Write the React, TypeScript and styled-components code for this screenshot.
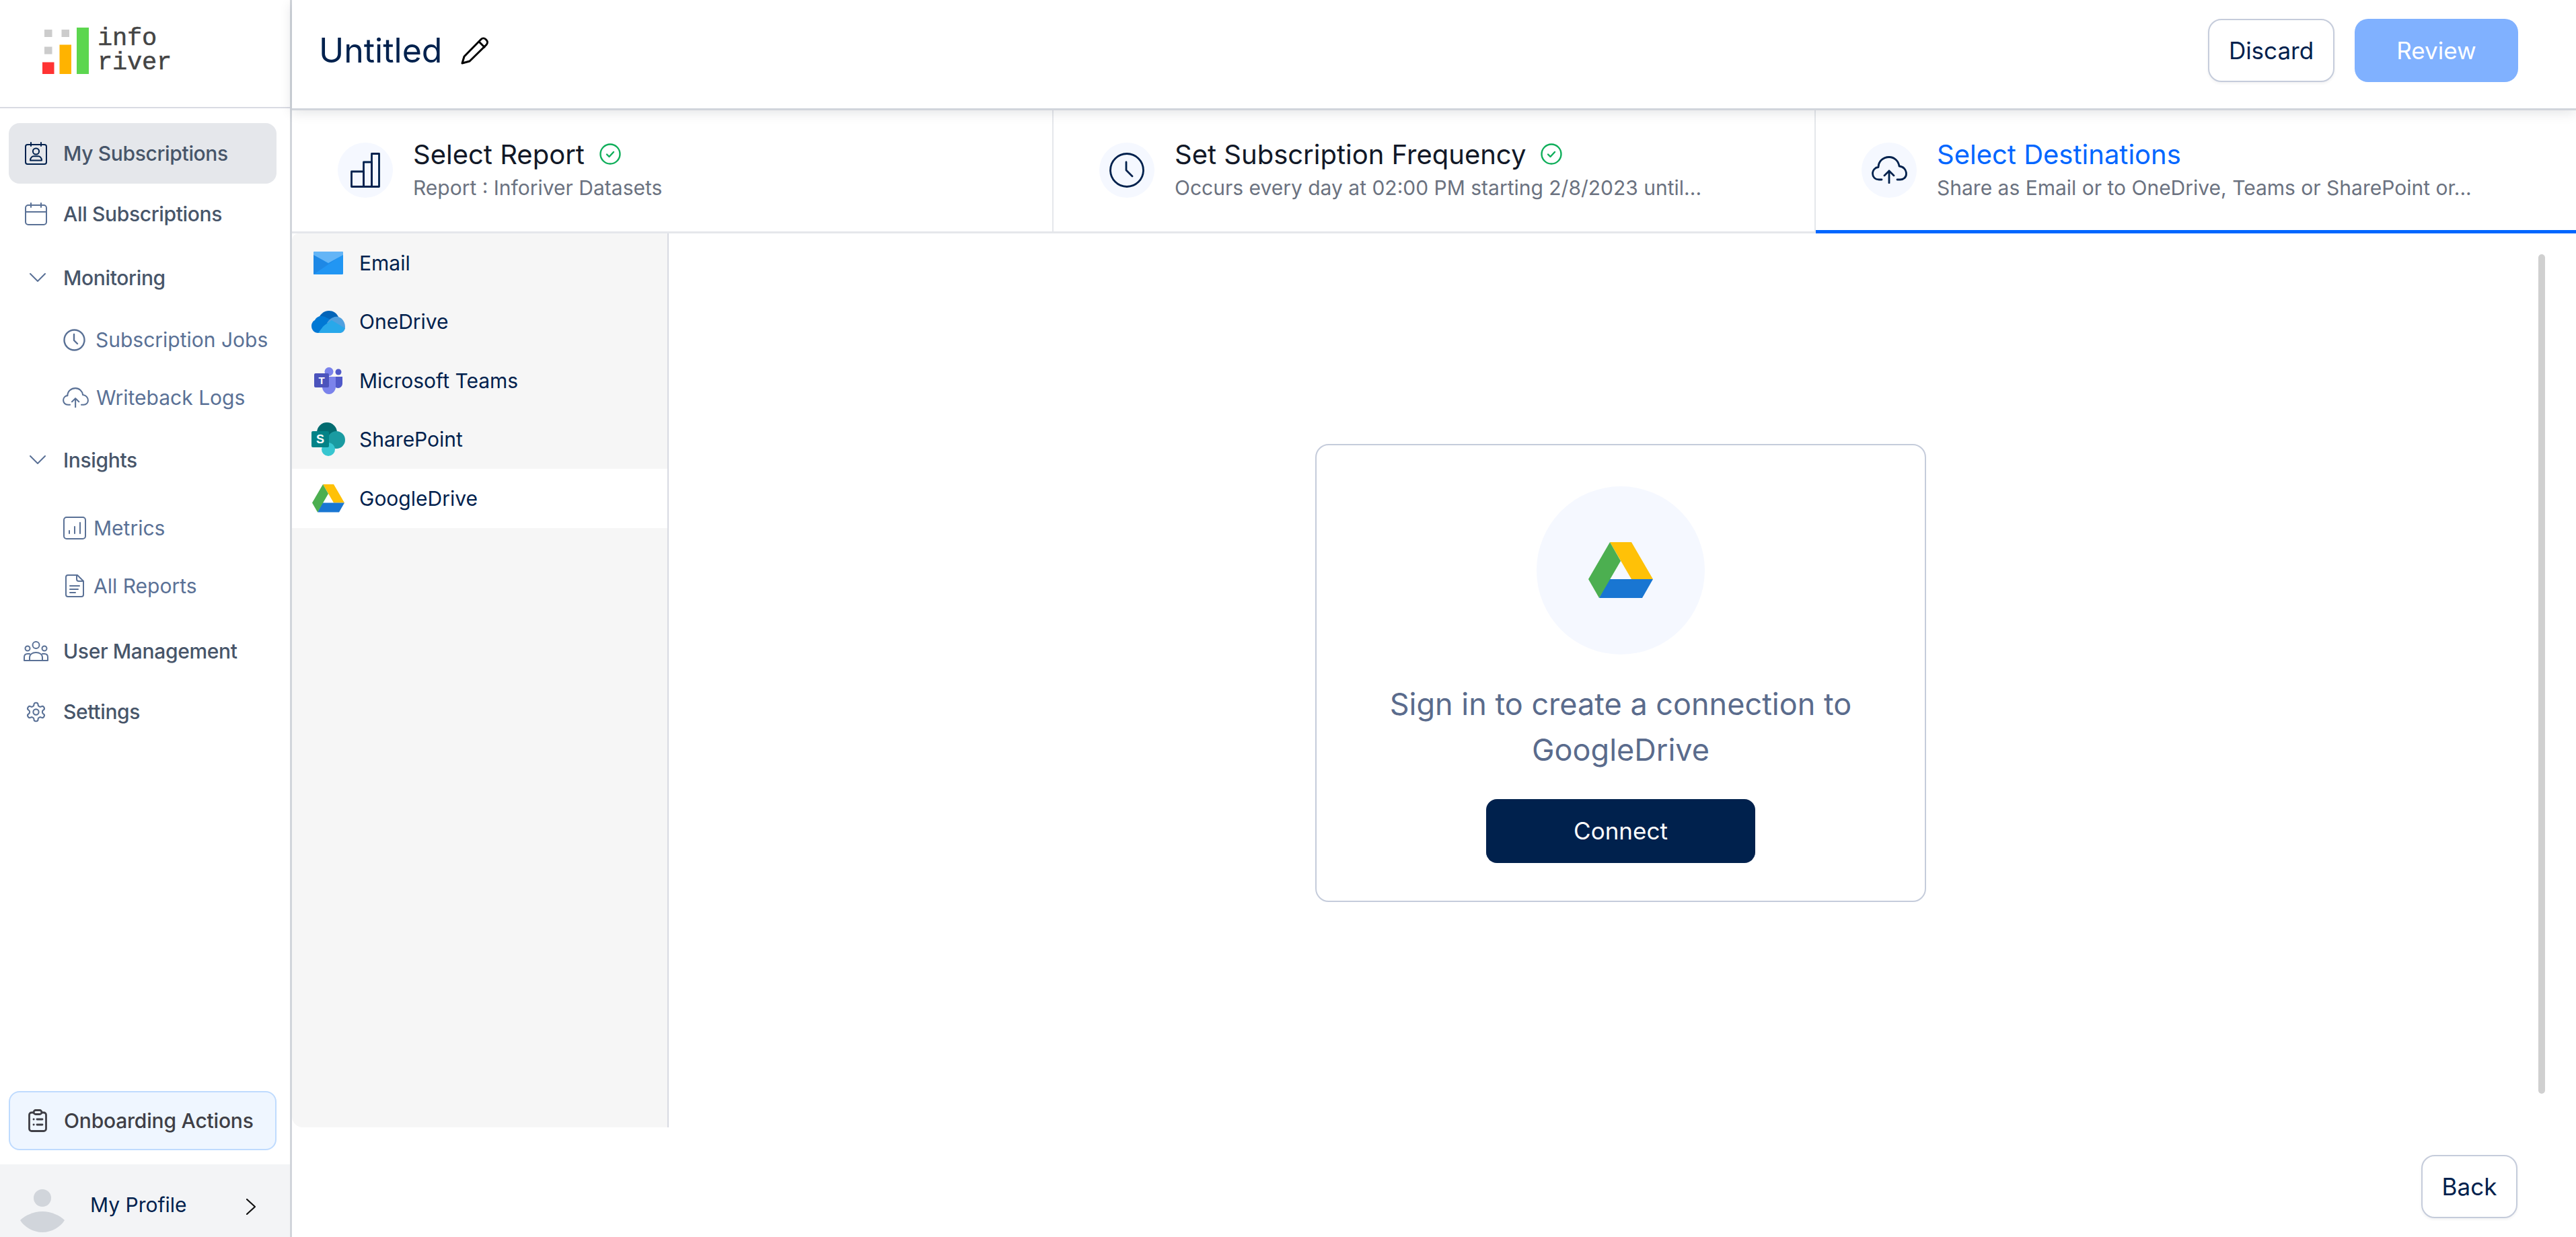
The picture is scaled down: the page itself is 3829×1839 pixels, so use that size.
import React from 'react';
import styled, { createGlobalStyle } from 'styled-components';

const GlobalStyle = createGlobalStyle`
  * { box-sizing: border-box; }
  html, body { margin: 0; padding: 0; height: 100%; background: #fff; }
  body { font-family: Inter, "Noto Sans", sans-serif; overflow: hidden; }
`;

const NAVY = '#00214d';
const SLATE = '#5a7196';

const Page = styled.div`
  display: flex;
  width: 100vw;
  height: 100vh;
`;

const Sidebar = styled.aside`
  width: 434px;
  flex: none;
  display: flex;
  flex-direction: column;
  border-right: 3px solid #d1d5db;
`;

const LogoBar = styled.div`
  height: 161px;
  flex: none;
  display: flex;
  align-items: flex-start;
  gap: 12px;
  padding: 41px 0 0 63px;
  border-bottom: 2px solid #d9dbe3;
`;

const LogoText = styled.div`
  font-family: "Liberation Mono", monospace;
  font-size: 37px;
  line-height: 36px;
  letter-spacing: -0.2px;
  -webkit-text-stroke: 0.5px #444;
  color: #444;
  margin-top: -2px;
`;

const Nav = styled.nav`
  flex: 1;
  display: flex;
  flex-direction: column;
  padding: 22px 20px 0 13px;
`;

const NavRow = styled.div<{ $active?: boolean; $top?: number }>`
  height: 90px;
  flex: none;
  display: flex;
  align-items: center;
  padding-left: 24px;
  margin-top: ${(p) => p.$top ?? 0}px;
  border-radius: 16px;
  background: ${(p) => (p.$active ? '#e5e7eb' : 'transparent')};
  font-size: 30px;
  font-weight: 500;
  letter-spacing: -0.35px;
  color: #475569;
`;

const NavIcon = styled.span`
  width: 57px;
  flex: none;
  display: flex;
  align-items: center;
`;

const SubRow = styled.div<{ $top?: number; $gap: number; $left?: number }>`
  height: 86px;
  flex: none;
  display: flex;
  align-items: center;
  gap: ${(p) => p.$gap}px;
  padding-left: ${(p) => p.$left ?? 81}px;
  margin-top: ${(p) => p.$top ?? 0}px;
  font-size: 30px;
  color: ${SLATE};
`;

const Onboarding = styled.div`
  height: 88px;
  margin: 0 20px 21px 13px;
  display: flex;
  align-items: center;
  gap: 25px;
  padding-left: 27px;
  background: #eff6ff;
  border: 2px solid #bfdbfe;
  border-radius: 16px;
  font-size: 30px;
  font-weight: 500;
  letter-spacing: -0.2px;
  color: #3f3f46;
`;

const Profile = styled.div`
  height: 108px;
  flex: none;
  display: flex;
  align-items: center;
  padding: 0 51px 0 30px;
  background: #f3f4f6;
  font-size: 30px;
  color: ${NAVY};
`;

const ProfileName = styled.span`
  flex: 1;
  margin: 12px 0 0 38px;
`;

const Main = styled.main`
  flex: 1;
  min-width: 0;
  display: flex;
  flex-direction: column;
`;

const Header = styled.header`
  position: relative;
  z-index: 2;
  height: 161px;
  flex: none;
  display: flex;
  align-items: center;
  padding: 0 86px 11px 40px;
  background: #fff;
  box-shadow: 0 3px 0 #d1d5db, 0 6px 18px rgba(17, 24, 39, 0.12);
`;

const PageTitle = styled.h1`
  margin: 0 28px 0 0;
  font-size: 50px;
  font-weight: 400;
  color: ${NAVY};
`;

const HeaderActions = styled.div`
  margin-left: auto;
  display: flex;
  gap: 30px;
`;

const OutlineButton = styled.button<{ $width: number }>`
  width: ${(p) => p.$width}px;
  height: 94px;
  background: #fff;
  border: 2px solid #c5ccdb;
  border-radius: 20px;
  font-family: inherit;
  font-size: 35px;
  color: ${NAVY};
  box-shadow: 0 2px 4px rgba(17, 24, 39, 0.06);
`;

const ReviewButton = styled.button`
  width: 243px;
  height: 94px;
  background: #80b1ff;
  border: none;
  border-radius: 20px;
  font-family: inherit;
  font-size: 35px;
  color: #fff;
`;

const Tabs = styled.div`
  height: 186px;
  flex: none;
  display: grid;
  grid-template-columns: 1132px 1133px 1fr;
  border-bottom: 3px solid #e5e7eb;
`;

const Tab = styled.div<{ $active?: boolean }>`
  position: relative;
  min-width: 0;
  display: flex;
  align-items: center;
  gap: 30px;
  padding: 0 0 0 68px;
  border-right: 2px solid #e5e7eb;
  &:last-child { border-right: none; }
  &::after {
    content: '';
    display: ${(p) => (p.$active ? 'block' : 'none')};
    position: absolute;
    left: 0;
    right: 0;
    bottom: -3px;
    height: 5px;
    background: #0066ff;
  }
`;

const TabBubble = styled.div`
  width: 82px;
  height: 82px;
  flex: none;
  display: flex;
  align-items: center;
  justify-content: center;
  border-radius: 50%;
  background: #f5f8ff;
`;

const TabText = styled.div`
  display: flex;
  flex-direction: column;
  min-width: 0;
  margin-top: -2px;
`;

const TabTitle = styled.div<{ $active?: boolean }>`
  display: flex;
  align-items: center;
  gap: 22px;
  height: 50px;
  font-size: 40px;
  color: ${(p) => (p.$active ? '#0066ff' : '#111827')};
`;

const TabSub = styled.div`
  margin-top: 5px;
  line-height: 40px;
  font-size: 30px;
  color: #6b7280;
  white-space: nowrap;
`;

const Body = styled.div`
  height: 1329px;
  flex: none;
  display: flex;
`;

const DestList = styled.div`
  width: 560px;
  flex: none;
  display: flex;
  flex-direction: column;
  background: #f6f6f6;
  border-right: 2px solid #d8dae2;
  border-radius: 10px 0 0 16px;
`;

const DestRow = styled.div<{ $active?: boolean }>`
  height: 87.5px;
  flex: none;
  display: flex;
  align-items: center;
  padding-left: 29px;
  background: ${(p) => (p.$active ? '#fff' : 'transparent')};
  font-size: 30px;
  color: ${NAVY};
`;

const DestIcon = styled.span`
  width: 71px;
  flex: none;
  display: flex;
  justify-content: center;
  padding-right: 21px;
`;

const Canvas = styled.div`
  position: relative;
  flex: 1;
  display: flex;
  align-items: center;
  justify-content: center;
  padding: 0 5px 23px 0;
`;

const ScrollThumb = styled.div`
  position: absolute;
  top: 31px;
  right: 46px;
  bottom: 50px;
  width: 10px;
  border-radius: 5px;
  background: #d0d0d0;
`;

const ConnectCard = styled.div`
  width: 908px;
  height: 681px;
  display: flex;
  flex-direction: column;
  align-items: center;
  padding-top: 61px;
  border: 2px solid #c5ccdb;
  border-radius: 20px;
  background: #fff;
`;

const CardBubble = styled.div`
  width: 250px;
  height: 250px;
  flex: none;
  display: flex;
  align-items: center;
  justify-content: center;
  border-radius: 50%;
  background: #f5f8ff;
`;

const CardMessage = styled.p`
  width: 720px;
  margin: 40px 0 0;
  text-align: center;
  font-size: 45px;
  line-height: 68.5px;
  color: #5a6b8c;
`;

const ConnectButton = styled.button`
  width: 400px;
  height: 95px;
  flex: none;
  margin-top: 38px;
  background: ${NAVY};
  border: none;
  border-radius: 16px;
  font-family: inherit;
  font-size: 35px;
  color: #fff;
`;

const Footer = styled.footer`
  flex: 1;
  display: flex;
  justify-content: flex-end;
  padding: 41px 87px 0 0;
`;

const Stroke = styled.svg`
  display: block;
  flex: none;
  fill: none;
  stroke-linecap: round;
  stroke-linejoin: round;
`;

const AvatarSvg = styled.svg`
  display: block;
  flex: none;
  margin-top: 30px;
`;

const LogoMark = () => (
  <svg width="70" height="69" viewBox="0 0 70 69">
    <rect x="3" y="3" width="11.5" height="11" fill="#cccccc" />
    <rect x="28.5" y="3" width="11.5" height="11" fill="#cccccc" />
    <rect x="3" y="28.5" width="11.5" height="11" fill="#cccccc" />
    <rect x="0" y="51.5" width="17.5" height="17.5" fill="#ff3333" />
    <rect x="25.5" y="25.5" width="17.5" height="43.500" fill="#ffb300" />
    <rect x="51" y="0" width="18" height="69" fill="#5cd64f" />
  </svg>
);

const CalendarPerson = () => (
  <Stroke width="33" height="34" viewBox="0 0 33 34" stroke={NAVY} strokeWidth="2">
    <rect x="1" y="4" width="31" height="29" rx="3" />
    <path d="M9 1v5M24 1v5" />
    <circle cx="16.500" cy="14" r="4.600" />
    <path d="M8 27.500c0-4 2.800-6.200 5-6.200h7c2.200 0 5 2.200 5 6.200z" />
  </Stroke>
);

const CalendarLine = () => (
  <Stroke width="33" height="34" viewBox="0 0 33 34" stroke={SLATE} strokeWidth="2">
    <rect x="1" y="4" width="31" height="29" rx="4" />
    <path d="M9 1v6M24 1v6M1 14h31" />
  </Stroke>
);

const ChevronDown = () => (
  <Stroke width="24" height="14" viewBox="0 0 24 14" stroke={SLATE} strokeWidth="2" style={{ marginLeft: 7 }}>
    <path d="M1 1l11 11L23 1" />
  </Stroke>
);

const ClockSmall = () => (
  <Stroke width="33" height="33" viewBox="0 0 33 33" stroke={SLATE} strokeWidth="2.400">
    <circle cx="16.500" cy="16.500" r="15" />
    <path d="M16 8v9l5 5" />
  </Stroke>
);

const CloudUp = ({ color = SLATE, width = 39, weight = 2.800 }: { color?: string; width?: number; weight?: number }) => (
  <Stroke width={width} height={(width * 41) / 53} viewBox="0 0 53 41" stroke={color} strokeWidth={weight}>
    <path d="M15 35h-4C5 35 1.500 31 1.500 26c0-5 3.500-9 8.500-9.500C10 8 17 1.500 26 1.500c8 0 14 6 15 13.500 6 .5 10.500 5 10.500 11.500 0 5-4 8.500-9 8.500H38" />
    <path d="M26 40V22M19 29l7-7 7 7" />
  </Stroke>
);

const MetricsIcon = () => (
  <Stroke width="34" height="34" viewBox="0 0 34 34" stroke={SLATE} strokeWidth="2">
    <rect x="1" y="1" width="32" height="32" rx="4" />
    <path d="M9 21v4M17 15v10M25 9v16" />
  </Stroke>
);

const ReportIcon = () => (
  <Stroke width="28" height="34" viewBox="0 0 28 34" stroke={SLATE} strokeWidth="2">
    <path d="M4 1h14l9 9v20a3 3 0 0 1-3 3H4a3 3 0 0 1-3-3V4a3 3 0 0 1 3-3z" />
    <path d="M17 1v6a3 3 0 0 0 3 3h7M7 17h14M7 22h12M7 27h8" />
  </Stroke>
);

const UsersIcon = () => (
  <Stroke width="37" height="30" viewBox="0 0 37 30" stroke={SLATE} strokeWidth="2" style={{ marginLeft: -2 }}>
    <circle cx="18.500" cy="6" r="5" />
    <circle cx="6" cy="11" r="3.500" />
    <circle cx="31" cy="11" r="3.500" />
    <path d="M1 29v-5c0-3 2-5 5-5h3M36 29v-5c0-3-2-5-5-5h-3M9 29v-5c0-4 4-7 9.500-7s9.500 3 9.500 7v5M1 29h35" />
  </Stroke>
);

const GearIcon = () => (
  <Stroke width="33" height="33" viewBox="0 0 24 24" stroke={SLATE} strokeWidth="1.500">
    <path d="M12.220 2h-.44a2 2 0 0 0-2 2v.18a2 2 0 0 1-1 1.730l-.43.250a2 2 0 0 1-2 0l-.15-.080a2 2 0 0 0-2.730.730l-.22.380a2 2 0 0 0 .730 2.730l.15.100a2 2 0 0 1 1 1.720v.510a2 2 0 0 1-1 1.740l-.15.090a2 2 0 0 0-.730 2.730l.22.380a2 2 0 0 0 2.730.730l.15-.080a2 2 0 0 1 2 0l.43.250a2 2 0 0 1 1 1.730V20a2 2 0 0 0 2 2h.44a2 2 0 0 0 2-2v-.18a2 2 0 0 1 1-1.730l.43-.250a2 2 0 0 1 2 0l.15.080a2 2 0 0 0 2.730-.730l.22-.390a2 2 0 0 0-.730-2.730l-.15-.080a2 2 0 0 1-1-1.740v-.500a2 2 0 0 1 1-1.740l.15-.090a2 2 0 0 0 .730-2.730l-.22-.380a2 2 0 0 0-2.730-.730l-.15.080a2 2 0 0 1-2 0l-.43-.250a2 2 0 0 1-1-1.730V4a2 2 0 0 0-2-2z" />
    <circle cx="12" cy="12" r="3" />
  </Stroke>
);

const ClipboardIcon = () => (
  <Stroke width="28" height="34" viewBox="0 0 28 34" stroke="#3f3f46" strokeWidth="2.800">
    <path d="M8 5H5a3.500 3.500 0 0 0-3.500 3.500V29A3.500 3.500 0 0 0 5 32.500h18a3.500 3.500 0 0 0 3.500-3.500V8.500A3.500 3.500 0 0 0 23 5h-3" />
    <rect x="8" y="1.500" width="12" height="6" rx="3" />
    <path d="M8 15h.2M13 15h8M8 23h.2M13 23h8" />
  </Stroke>
);

const Avatar = () => (
  <AvatarSvg width="66" height="64" viewBox="0 0 66 64">
    <circle cx="33" cy="13" r="13" fill="#d1d5db" />
    <path d="M0 46c7-7 20-13 33-13s26 6 33 13c-6 10-19 18-33 18S6 56 0 46z" fill="#d1d5db" />
  </AvatarSvg>
);

const ChevronRight = () => (
  <Stroke width="14" height="24" viewBox="0 0 14 24" stroke="#111" strokeWidth="2.200" style={{ marginTop: 18 }}>
    <path d="M1 1l12 11L1 23" />
  </Stroke>
);

const PencilIcon = () => (
  <Stroke width="42" height="42" viewBox="0 0 42 42" stroke="#000" strokeWidth="3">
    <path d="M2 40l3-10L30 4.500a5 5 0 0 1 7 0l1 1a5 5 0 0 1 0 7L13 37z" />
    <path d="M27 8l8 8" />
  </Stroke>
);

const BarsIcon = () => (
  <Stroke width="44" height="52" viewBox="0 0 44 52" stroke={NAVY} strokeWidth="2.800">
    <rect x="1.500" y="28" width="18" height="22.500" />
    <rect x="19.500" y="14" width="12" height="36.500" />
    <rect x="31.500" y="1.500" width="11" height="49" />
  </Stroke>
);

const ClockLarge = () => (
  <Stroke width="52" height="52" viewBox="0 0 52 52" stroke={NAVY} strokeWidth="2.800">
    <circle cx="26" cy="26" r="24.500" />
    <path d="M25 14v12l9 9" />
  </Stroke>
);

const CheckCircle = () => (
  <Stroke width="32" height="32" viewBox="0 0 32 32" stroke="#0fae5a" strokeWidth="2.400">
    <circle cx="16" cy="16" r="14.500" />
    <path d="M11 16.500l3.500 3.500 6.500-7" />
  </Stroke>
);

const MailIcon = () => (
  <svg width="44" height="34" viewBox="0 0 44 34">
    <rect width="44" height="34" rx="1.500" fill="#2196f3" />
    <path d="M0 34V4l22 14 22-14v0L0 34z" fill="#1e88e5" />
    <path d="M0 2a2 2 0 0 1 2-2h40a2 2 0 0 1 2 2v3L22 17 0 5z" fill="#64b5f6" />
  </svg>
);

const OneDriveIcon = () => (
  <svg width="50" height="33" viewBox="0 0 50 33">
    <path d="M10 15C11 6 18 0 26 0c6 0 11 3 14 9L20 20z" fill="#0364b8" />
    <path d="M20 9c-6-2-12-1-15 5C1 16 0 20 0 23c0 5 4 10 10 10h5l19-17z" fill="#0078d4" />
    <path d="M40 9c-5-1-10 1-14 5l-3 4 16 15h3c5 0 8-4 8-9 0-7-4-13-10-15z" fill="#50a0df" />
    <path d="M10 33h30c4 0 8-2 10-7l-20-12-10 7c-3 2-6 7-10 12z" fill="#28a8ea" />
  </svg>
);

const TeamsIcon = () => (
  <svg width="42" height="40" viewBox="0 0 42 40">
    <circle cx="36" cy="7" r="4.500" fill="#5059c9" />
    <path d="M29 14h13v10c0 4-3 7-6.500 7S29 28 29 24z" fill="#5059c9" />
    <circle cx="22" cy="6.500" r="6.500" fill="#7b83eb" />
    <path d="M12 14h20v15c0 6-4.500 11-10 11s-10-5-10-11z" fill="#7b83eb" />
    <rect y="9" width="22" height="21" rx="2" fill="#4b53bc" />
    <text x="11" y="25" textAnchor="middle" fontFamily="Liberation Sans, sans-serif" fontWeight="700" fontSize="15" fill="#fff">T</text>
  </svg>
);

const SharePointIcon = () => (
  <svg width="50" height="50" viewBox="0 0 50 50">
    <circle cx="23" cy="15" r="15" fill="#036c70" />
    <circle cx="37" cy="26" r="13" fill="#1a9ba1" />
    <circle cx="25" cy="40" r="10" fill="#37c6d0" />
    <rect y="13" width="26" height="24" rx="2" fill="#038387" />
    <text x="13" y="31" textAnchor="middle" fontFamily="Liberation Sans, sans-serif" fontWeight="700" fontSize="18" fill="#fff">S</text>
  </svg>
);

const DriveIcon = ({ width }: { width: number }) => (
  <svg width={width} height={(width * 83) / 96} viewBox="0 0 96 83">
    <polygon points="32,0 64,0 96,55 64,55" fill="#ffc107" />
    <polygon points="30,55 96,55 80,83 16,83" fill="#1976d2" />
    <polygon points="32,0 48,28 16,83 0,55" fill="#4caf50" />
  </svg>
);

const App = () => {
  return (
    <Page>
      <GlobalStyle />
      <Sidebar>
        <LogoBar>
          <LogoMark />
          <LogoText>
            info
            <br />
            river
          </LogoText>
        </LogoBar>
        <Nav>
          <NavRow $active>
            <NavIcon><CalendarPerson /></NavIcon>
            My Subscriptions
          </NavRow>
          <NavRow>
            <NavIcon><CalendarLine /></NavIcon>
            All Subscriptions
          </NavRow>
          <NavRow $top={5}>
            <NavIcon><ChevronDown /></NavIcon>
            Monitoring
          </NavRow>
          <SubRow $top={4} $gap={15}>
            <ClockSmall />
            Subscription Jobs
          </SubRow>
          <SubRow $gap={11} $left={80}>
            <CloudUp />
            Writeback Logs
          </SubRow>
          <NavRow $top={5}>
            <NavIcon><ChevronDown /></NavIcon>
            Insights
          </NavRow>
          <SubRow $top={13} $gap={11}>
            <MetricsIcon />
            Metrics
          </SubRow>
          <SubRow $gap={14} $left={84}>
            <ReportIcon />
            All Reports
          </SubRow>
          <NavRow $top={9}>
            <NavIcon><UsersIcon /></NavIcon>
            User Management
          </NavRow>
          <NavRow>
            <NavIcon><GearIcon /></NavIcon>
            Settings
          </NavRow>
        </Nav>
        <Onboarding>
          <ClipboardIcon />
          Onboarding Actions
        </Onboarding>
        <Profile>
          <Avatar />
          <ProfileName>My Profile</ProfileName>
          <ChevronRight />
        </Profile>
      </Sidebar>
      <Main>
        <Header>
          <PageTitle>Untitled</PageTitle>
          <PencilIcon />
          <HeaderActions>
            <OutlineButton $width={188}>Discard</OutlineButton>
            <ReviewButton>Review</ReviewButton>
          </HeaderActions>
        </Header>
        <Tabs>
          <Tab>
            <TabBubble><BarsIcon /></TabBubble>
            <TabText>
              <TabTitle>Select Report <CheckCircle /></TabTitle>
              <TabSub>Report : Inforiver Datasets</TabSub>
            </TabText>
          </Tab>
          <Tab>
            <TabBubble><ClockLarge /></TabBubble>
            <TabText>
              <TabTitle>Set Subscription Frequency <CheckCircle /></TabTitle>
              <TabSub>Occurs every day at 02:00 PM starting 2/8/2023 until...</TabSub>
            </TabText>
          </Tab>
          <Tab $active>
            <TabBubble><CloudUp color={NAVY} width={53} /></TabBubble>
            <TabText>
              <TabTitle $active>Select Destinations</TabTitle>
              <TabSub>Share as Email or to OneDrive, Teams or SharePoint or...</TabSub>
            </TabText>
          </Tab>
        </Tabs>
        <Body>
          <DestList>
            <DestRow><DestIcon><MailIcon /></DestIcon>Email</DestRow>
            <DestRow><DestIcon><OneDriveIcon /></DestIcon>OneDrive</DestRow>
            <DestRow><DestIcon><TeamsIcon /></DestIcon>Microsoft Teams</DestRow>
            <DestRow><DestIcon><SharePointIcon /></DestIcon>SharePoint</DestRow>
            <DestRow $active><DestIcon><DriveIcon width={48} /></DestIcon>GoogleDrive</DestRow>
          </DestList>
          <Canvas>
            <ConnectCard>
              <CardBubble><DriveIcon width={96} /></CardBubble>
              <CardMessage>Sign in to create a connection to GoogleDrive</CardMessage>
              <ConnectButton>Connect</ConnectButton>
            </ConnectCard>
            <ScrollThumb />
          </Canvas>
        </Body>
        <Footer>
          <OutlineButton $width={143}>Back</OutlineButton>
        </Footer>
      </Main>
    </Page>
  );
};

export default App;
